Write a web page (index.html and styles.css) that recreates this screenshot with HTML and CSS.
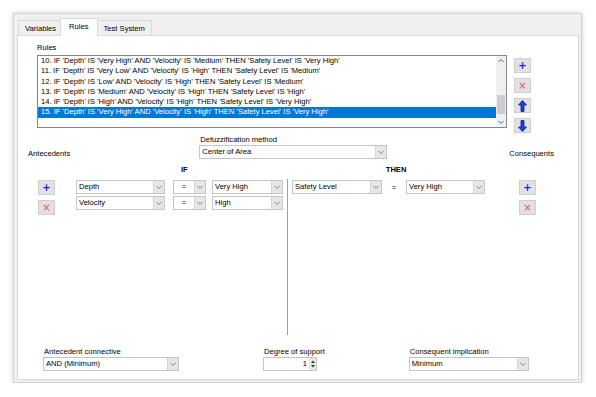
FILE: index.html
```html
<!DOCTYPE html>
<html>
<head>
  <meta charset="UTF-8">
  <title>Fuzzy Rules</title>
  <link rel="stylesheet" href="styles.css">
</head>
<body>
  <div class="window">
    <div class="tabs">
      <div class="tab">Variables</div>
      <div class="tab active">Rules</div>
      <div class="tab">Test System</div>
    </div>
    <div class="panel">
      <div class="rules-label">Rules</div>
      <div class="rules-row">
        <div class="listbox">
          <ul class="rule-list">
            <li>10. IF 'Depth' IS 'Very High' AND 'Velocity' IS 'Medium' THEN 'Safety Level' IS 'Very High'</li>
            <li>11. IF 'Depth' IS 'Very Low' AND 'Velocity' IS 'High' THEN 'Safety Level' IS 'Medium'</li>
            <li>12. IF 'Depth' IS 'Low' AND 'Velocity' IS 'High' THEN 'Safety Level' IS 'Medium'</li>
            <li>13. IF 'Depth' IS 'Medium' AND 'Velocity' IS 'High' THEN 'Safety Level' IS 'High'</li>
            <li>14. IF 'Depth' IS 'High' AND 'Velocity' IS 'High' THEN 'Safety Level' IS 'Very High'</li>
            <li class="selected">15. IF 'Depth' IS 'Very High' AND 'Velocity' IS 'High' THEN 'Safety Level' IS 'Very High'</li>
          </ul>
          <div class="scrollbar">
            <svg class="sb-arrow" width="10" height="10" viewBox="0 0 10 10"><polyline points="2.5,6 5,3.5 7.5,6" fill="none" stroke="#606060" stroke-width="1"/></svg>
            <div class="sb-track"><div class="sb-thumb"></div></div>
            <svg class="sb-arrow" width="10" height="10" viewBox="0 0 10 10"><polyline points="2.5,4 5,6.5 7.5,4" fill="none" stroke="#606060" stroke-width="1"/></svg>
          </div>
        </div>
        <div class="btn-col list-btns">
          <button class="btn plus">+</button>
          <button class="btn del">&#215;</button>
          <button class="btn">
            <svg width="9" height="12" viewBox="0 0 9 12"><path d="M4.5 0.5 L8.5 5 L6 5 L6 11.5 L3 11.5 L3 5 L0.5 5 Z" fill="#1f3fe0" stroke="#10208a" stroke-width="0.8"/></svg>
          </button>
          <button class="btn">
            <svg width="9" height="12" viewBox="0 0 9 12"><path d="M4.5 11.5 L8.5 7 L6 7 L6 0.5 L3 0.5 L3 7 L0.5 7 Z" fill="#1f3fe0" stroke="#10208a" stroke-width="0.8"/></svg>
          </button>
        </div>
      </div>

      <div class="defuzz-row">
        <div class="side-label ante-label">Antecedents</div>
        <div class="field defuzz">
          <div class="field-label">Defuzzification method</div>
          <div class="combo w-defuzz"><span class="combo-text">Center of Area</span><span class="combo-arrow"></span></div>
        </div>
        <div class="side-label cons-label">Consequents</div>
      </div>

      <div class="heads">
        <span class="head-if">IF</span>
        <span class="head-then">THEN</span>
      </div>

      <div class="editor">
        <div class="btn-col ante-btns">
          <button class="btn plus">+</button>
          <button class="btn del">&#215;</button>
        </div>
        <div class="if-part">
          <div class="cond-row">
            <div class="combo w-var"><span class="combo-text">Depth</span><span class="combo-arrow"></span></div>
            <div class="combo w-op"><span class="combo-text center">=</span><span class="combo-arrow"></span></div>
            <div class="combo w-val"><span class="combo-text">Very High</span><span class="combo-arrow"></span></div>
          </div>
          <div class="cond-row">
            <div class="combo w-var"><span class="combo-text">Velocity</span><span class="combo-arrow"></span></div>
            <div class="combo w-op"><span class="combo-text center">=</span><span class="combo-arrow"></span></div>
            <div class="combo w-val"><span class="combo-text">High</span><span class="combo-arrow"></span></div>
          </div>
        </div>
        <div class="divider"></div>
        <div class="then-part">
          <div class="cond-row">
            <div class="combo w-cvar"><span class="combo-text">Safety Level</span><span class="combo-arrow"></span></div>
            <span class="eq">=</span>
            <div class="combo w-cval"><span class="combo-text">Very High</span><span class="combo-arrow"></span></div>
          </div>
        </div>
        <div class="btn-col cons-btns">
          <button class="btn plus">+</button>
          <button class="btn del">&#215;</button>
        </div>
      </div>

      <div class="bottom-row">
        <div class="field f-conn">
          <div class="field-label">Antecedent connective</div>
          <div class="combo w-conn"><span class="combo-text">AND (Minimum)</span><span class="combo-arrow"></span></div>
        </div>
        <div class="field f-degree">
          <div class="field-label">Degree of support</div>
          <div class="spin">
            <span class="spin-value">1</span>
            <span class="spin-btns">
              <svg width="6" height="12" viewBox="0 0 6 12"><path d="M1 5 L3 2.5 L5 5 Z" fill="#333"/><path d="M1 7 L3 9.5 L5 7 Z" fill="#333"/></svg>
            </span>
          </div>
        </div>
        <div class="field f-impl">
          <div class="field-label">Consequent implication</div>
          <div class="combo w-impl"><span class="combo-text">Minimum</span><span class="combo-arrow"></span></div>
        </div>
      </div>
    </div>
  </div>
</body>
</html>
```

FILE: styles.css
```css
body {
  margin: 0;
  background-color: white;
  font-family: 'Liberation Sans', Arial, sans-serif;
  font-size: 7.6px;
  color: #000;
}
.window {
  margin: 13px 0 0 13px;
  width: 569px;
  height: 370px;
  box-sizing: border-box;
  background-color: #f0f0f0;
  border: 1px solid #d4d4d4;
  box-shadow: 0 0 5px rgba(0,0,0,0.2);
  padding: 0 2px 2px 3px;
  display: flex;
  flex-direction: column;
}
.tabs {
  display: flex;
  align-items: flex-end;
  height: 21px;
  padding-left: 1px;
}
.tab {
  height: 14px;
  line-height: 15px;
  padding: 0 6px;
  border: 1px solid #d9d9d9;
  border-bottom: none;
  background-color: #f0f0f0;
  margin-right: -1px;
}
.tab.active {
  height: 17px;
  line-height: 15px;
  padding: 0 8px;
  background-color: white;
  position: relative;
  z-index: 1;
  margin: 0 -1px -1px -2px;
}
.panel {
  flex: 1;
  background-color: white;
  border: 1px solid #d9d9d9;
}
.rules-label {
  margin: 7px 0 0 19px;
  height: 10px;
  line-height: 10px;
}
.rules-row {
  display: flex;
  margin: 2px 0 0 19px;
}
.listbox {
  width: 470px;
  height: 73px;
  box-sizing: border-box;
  border: 1px solid #828790;
  display: flex;
}
.rule-list {
  list-style: none;
  margin: 0;
  padding: 0;
  flex: 1;
}
.rule-list li {
  height: 10.3px;
  line-height: 10.6px;
  padding-left: 3px;
  white-space: nowrap;
  overflow: hidden;
}
.rule-list li.selected {
  background-color: #0078d7;
  color: white;
}
.scrollbar {
  width: 10px;
  display: flex;
  flex-direction: column;
  background-color: #f0f0f0;
}
.sb-arrow {
  display: block;
}
.sb-track {
  flex: 1;
  display: flex;
  flex-direction: column;
  justify-content: flex-end;
  padding-bottom: 3px;
}
.sb-thumb {
  height: 19px;
  margin: 0 1px;
  background-color: #cdcdcd;
}
.btn-col {
  display: flex;
  flex-direction: column;
}
.list-btns {
  margin: 3px 0 0 7px;
  gap: 5px;
}
.btn {
  width: 17px;
  height: 15px;
  padding: 0;
  margin: 0;
  background-color: #e1e1e1;
  border: 1px solid #cfcfcf;
  display: flex;
  align-items: center;
  justify-content: center;
  font-family: 'DejaVu Sans', sans-serif;
  font-size: 10px;
  line-height: 1;
}
.btn.plus {
  color: #1a1aff;
  font-weight: bold;
}
.btn.del {
  color: #e8506a;
  font-size: 10px;
}
.defuzz-row {
  display: flex;
  align-items: flex-end;
  margin-top: 2px;
}
.side-label {
  height: 10px;
  line-height: 10px;
}
.ante-label {
  margin-left: 10px;
}
.defuzz {
  margin-left: 129px;
}
.cons-label {
  margin-left: 122px;
}
.field-label {
  height: 10px;
  line-height: 10px;
  margin-left: 1px;
}
.combo {
  height: 14px;
  box-sizing: border-box;
  border: 1px solid #c5c5c5;
  background-color: white;
  display: flex;
}
.combo-text {
  flex: 1;
  line-height: 12px;
  padding-left: 2px;
  white-space: nowrap;
  overflow: hidden;
}
.combo-text.center {
  text-align: center;
  padding-left: 0;
}
.combo-arrow {
  width: 10px;
  background-color: #e6e6e6;
  border-left: 1px solid #d4d4d4;
  background-image: url("data:image/svg+xml;utf8,<svg xmlns='http://www.w3.org/2000/svg' width='10' height='12'><polyline points='2.5,5 5,7.5 7.5,5' fill='none' stroke='%23808080' stroke-width='1'/></svg>");
  background-repeat: no-repeat;
  background-position: center;
}
.w-defuzz { width: 188px; }
.heads {
  display: flex;
  height: 10px;
  line-height: 10px;
  margin-top: 6px;
  font-weight: bold;
}
.head-if {
  margin-left: 163px;
}
.head-then {
  margin-left: 198px;
}
.editor {
  display: flex;
  height: 156px;
  margin-top: 4px;
}
.ante-btns {
  margin: 1px 0 0 20px;
  gap: 5px;
}
.if-part {
  margin: 1px 0 0 21px;
  display: flex;
  flex-direction: column;
  gap: 2px;
}
.cond-row {
  display: flex;
  align-items: center;
}
.w-var { width: 89px; }
.w-op { width: 33px; margin-left: 8px; }
.w-val { width: 71px; margin-left: 6px; }
.divider {
  width: 1px;
  background-color: #a0a0a0;
  margin-left: 4px;
}
.then-part {
  margin: 1px 0 0 4px;
}
.w-cvar { width: 90px; }
.eq {
  width: 24px;
  text-align: center;
}
.w-cval { width: 79px; }
.cons-btns {
  margin: 1px 0 0 34px;
  gap: 5px;
}
.bottom-row {
  display: flex;
  margin-top: 12px;
}
.f-conn { margin-left: 25px; }
.f-degree { margin-left: 84px; }
.f-impl { margin-left: 84px; }
.w-conn { width: 136px; }
.w-impl { width: 120px; }
.spin {
  width: 54px;
  height: 14px;
  box-sizing: border-box;
  border: 1px solid #c5c5c5;
  display: flex;
}
.spin-value {
  flex: 1;
  text-align: right;
  line-height: 12px;
  padding-right: 2px;
}
.spin-btns {
  width: 7px;
  background-color: #e6e6e6;
  display: flex;
  align-items: center;
  justify-content: center;
}
```
